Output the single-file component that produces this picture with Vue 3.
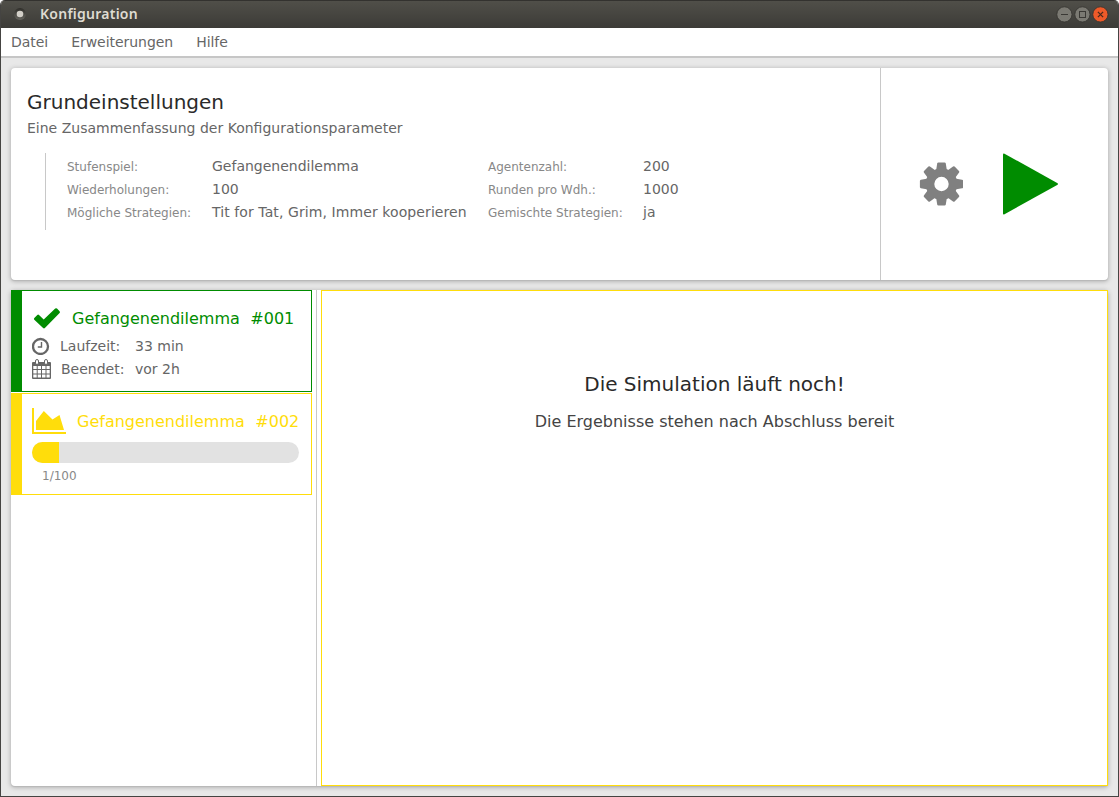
<script setup>
const menu = ['Datei', 'Erweiterungen', 'Hilfe']
const params = [
  ['Stufenspiel:', 'Gefangenendilemma', 'Agentenzahl:', '200'],
  ['Wiederholungen:', '100', 'Runden pro Wdh.:', '1000'],
  ['Mögliche Strategien:', 'Tit for Tat, Grim, Immer kooperieren', 'Gemischte Strategien:', 'ja'],
]
const progress = { done: 1, total: 100, width: 27 }
</script>

<template>
  <div class="window">
    <header class="titlebar">
      <svg class="app-icon" width="14" height="14" viewBox="0 0 14 14">
        <defs>
          <linearGradient id="ring" x1="0" y1="0" x2="0" y2="1">
            <stop offset="0" stop-color="#2f2e2a" />
            <stop offset="1" stop-color="#66655f" />
          </linearGradient>
        </defs>
        <circle cx="7" cy="7" r="6" fill="url(#ring)" />
        <circle cx="7" cy="7" r="3.3" fill="#d2cfc8" />
      </svg>
      <span class="title">Konfiguration</span>
      <div class="controls">
        <svg width="16" height="16" viewBox="0 0 16 16">
          <circle cx="8.4" cy="8.4" r="7.6" fill="#7b7a73" stroke="#33322e" stroke-width=".8" />
          <path d="M5 8.500h7" stroke="#3a3935" />
        </svg>
        <svg width="16" height="16" viewBox="0 0 16 16">
          <circle cx="8.400" cy="8.400" r="7.6" fill="#7b7a73" stroke="#33322e" stroke-width=".8" />
          <rect x="5.5" y="5.5" width="6" height="6" fill="none" stroke="#3a3935" />
        </svg>
        <svg width="16" height="16" viewBox="0 0 16 16">
          <circle cx="8.400" cy="8.400" r="7.6" fill="#ee5a29" stroke="#33322e" stroke-width=".8" />
          <path d="M5.900 5.900l5.200 5.200M11.100 5.900l-5.200 5.200" stroke="#4b2a1c" stroke-width="1.3" />
        </svg>
      </div>
    </header>

    <nav class="menubar">
      <span v-for="m in menu" :key="m">{{ m }}</span>
    </nav>

    <main class="content">
      <section class="card settings">
        <div class="summary">
          <h1>Grundeinstellungen</h1>
          <p class="sub">Eine Zusammenfassung der Konfigurationsparameter</p>
          <div class="params">
            <template v-for="row in params" :key="row[0]">
              <span class="label">{{ row[0] }}</span>
              <span class="value" :class="{ long: row[1].length > 20 }">{{ row[1] }}</span>
              <span class="label">{{ row[2] }}</span>
              <span class="value">{{ row[3] }}</span>
            </template>
          </div>
        </div>
        <div class="actions">
          <svg class="gear" width="44" height="44" viewBox="0 0 44 44">
            <g fill="#808080" transform="translate(.5 0)">
              <path
                v-for="n in 8"
                :key="n"
                :transform="`rotate(${n * 45} 22 22)`"
                d="M16.6 8.5L17.7 1.4Q17.9.4 18.9.4h6.2q1 0 1.2 1L27.4 8.5z"
              />
              <path fill-rule="evenodd" d="M22 6.2a15.8 15.8 0 1 0 0 31.6a15.8 15.8 0 1 0 0-31.6zM22 14.8a7.2 7.2 0 1 1 0 14.4a7.2 7.2 0 1 1 0-14.4z" />
            </g>
          </svg>
          <svg class="play" width="56" height="62" viewBox="0 0 56 62">
            <path d="M0 1.5Q0 .2 1.5.7L54.2 30Q55.8 31 54.2 32L1.5 61.2Q0 61.8 0 60.5z" fill="#008c00" />
          </svg>
        </div>
      </section>

      <section class="card workspace">
        <aside class="jobs">
          <article class="job done">
            <div class="job-head">
              <svg width="28" height="22" viewBox="0 0 28 22">
                <path d="M1.300 10.900L4.300 7.900Q5.200 7.100 6 7.900L10.700 12.500L22.200 1.600Q23.100.8 24 1.600L26.600 4.300Q27.400 5.200 26.600 6.100L11.900 21.100Q11 21.900 10.100 21.100L1.300 12.700Q.5 11.800 1.300 10.900z" fill="#008c00" />
              </svg>
              <span class="name">Gefangenendilemma</span><span class="num">#001</span>
            </div>
            <div class="info">
              <svg width="18" height="18" viewBox="0 0 18 18" fill="none" stroke="#666">
                <circle cx="8.500" cy="9.500" r="7.500" stroke-width="2.300" />
                <path d="M9.500 5v5H5.800" stroke-width="1.400" />
              </svg>
              <span class="key">Laufzeit:</span><span>33 min</span>
            </div>
            <div class="info calendar">
              <svg width="19" height="21" viewBox="0 0 19 21">
                <path fill="#666" fill-rule="evenodd" d="M1 3h17q1 0 1 1v15q0 1-1 1H1q-1 0-1-1V4q0-1 1-1zM1.300 7v3h3.400V7zM5.700 7v3H9V7zM10 7v3h3.500V7zM14.500 7v3h3.200V7zM1.300 11v3.400h3.400V11zM5.700 11v3.400H9V11zM10 11v3.400h3.500V11zM14.500 11v3.400h3.200V11zM1.300 15.400v3.200h3.400v-3.200zM5.700 15.400v3.200H9v-3.200zM10 15.400v3.200h3.500v-3.200zM14.500 15.400v3.200h3.200v-3.200z" />
                <rect x="3.500" y=".5" width="3" height="5" rx="1.500" fill="#fff" stroke="#666" />
                <rect x="12.500" y=".5" width="3" height="5" rx="1.500" fill="#fff" stroke="#666" />
              </svg>
              <span class="key">Beendet:</span><span>vor 2h</span>
            </div>
          </article>
          <article class="job running">
            <div class="job-head">
              <svg width="34" height="26" viewBox="0 0 34 26" fill="#ffdd0b">
                <path d="M0 0h2v24h32v2H0zM4 22v-9L11.800 3L20.500 11.500L27.500 7L32 22z" />
              </svg>
              <span class="name">Gefangenendilemma</span><span class="num">#002</span>
            </div>
            <div class="bar"><div class="fill" :style="{ width: progress.width + 'px' }"></div></div>
            <div class="count">{{ progress.done }}/{{ progress.total }}</div>
          </article>
        </aside>
        <div class="result">
          <h2>Die Simulation läuft noch!</h2>
          <p>Die Ergebnisse stehen nach Abschluss bereit</p>
        </div>
      </section>
    </main>
  </div>
</template>

<style>
body {
  background: #fff;
}
</style>

<style scoped>
* {
  box-sizing: border-box;
}
h1, h2, p {
  margin: 0;
  font-weight: 400;
}
svg {
  display: block;
  flex: none;
}
.window {
  display: flex;
  flex-direction: column;
  width: 1119px;
  height: 797px;
  border: 1px solid #454442;
  border-top: 0;
  border-radius: 5px 5px 0 0;
  overflow: hidden;
  background: #e8e8e8;
  font-family: "DejaVu Sans", sans-serif;
  white-space: nowrap;
}
.titlebar {
  display: flex;
  align-items: center;
  flex: none;
  height: 28px;
  padding: 0 10px 1px 12px;
  background: linear-gradient(#504f49, #3c3b37);
  border-top: 1px solid #33322f;
}
.controls svg {
  overflow: visible;
}
.title {
  margin-left: 13px;
  padding-bottom: 2px;
  flex: 1;
  font: 600 14px "Noto Sans", sans-serif;
  letter-spacing: 0.25px;
  color: #dfdbd2;
}
.controls {
  display: flex;
  gap: 2px;
}
.menubar {
  display: flex;
  flex: none;
  gap: 23px;
  height: 30px;
  padding-left: 10px;
  line-height: 29px;
  font-size: 14px;
  letter-spacing: -0.04px;
  color: #666;
  background: #fff;
  border-bottom: 2px solid #c6c6c6;
}
.content {
  display: flex;
  flex-direction: column;
  flex: 1;
  gap: 10px;
  padding: 10px;
}
.card {
  display: flex;
  background: #fff;
  border-radius: 4px;
  box-shadow: 0 1px 1px #b8b8b8, 0 1px 4px 1px #b8b8b8;
}
.settings {
  height: 212px;
  flex: none;
}
.summary {
  flex: 1;
  padding: 21px 0 0 16px;
}
h1 {
  font-size: 20px;
  line-height: 27px;
  color: #2a2a2a;
}
.sub {
  margin-top: 2px;
  font-size: 14px;
  line-height: 20px;
  color: #666;
}
.params {
  display: grid;
  grid-template-columns: 145px 276px 155px 100px;
  grid-auto-rows: 23px;
  margin: 15px 0 0 18px;
  padding: 2px 0 6px 21px;
  height: 77px;
  border-left: 1px solid #c8c8c8;
  line-height: 23px;
}
.label {
  padding-top: 1px;
  font-size: 12px;
  color: #888;
}
.value {
  font-size: 14px;
  color: #666;
}
.long {
  letter-spacing: 0.09px;
}
.actions {
  display: flex;
  width: 228px;
  padding: 85px 0 0 38px;
  gap: 40px;
  border-left: 1px solid #c8c8c8;
}
.gear {
  margin-top: 9px;
}
.workspace {
  flex: 1;
}
.jobs {
  width: 306px;
  flex: none;
  border-right: 1px solid #c8c8c8;
}
.job {
  width: 301px;
  height: 102px;
  border: 1px solid;
  border-left-width: 11px;
  margin-bottom: 1px;
}
.done {
  border-color: #008c00;
  color: #008c00;
  padding: 14px 0 0 10px;
}
.running {
  border-color: #ffdd0b;
  color: #ffdd0b;
  padding: 14px 0 0 10px;
}
.job-head {
  display: flex;
  align-items: center;
  height: 26px;
  font-size: 16px;
}
.done .job-head svg {
  margin: 0 11px 0 1px;
}
.running .job-head svg {
  margin-right: 11px;
}
.num {
  margin-left: 10.5px;
}
.info {
  display: flex;
  align-items: center;
  height: 23px;
  font-size: 14px;
  color: #666;
}
.done .job-head + .info {
  margin-top: 3px;
}
.info svg {
  margin-right: 10px;
}
.calendar svg {
  margin-top: 2px;
}
.key {
  width: 75px;
}
.info + .info .key {
  width: 74px;
}
.bar {
  width: 267px;
  height: 21px;
  margin-top: 8px;
  border-radius: 10.5px;
  background: #e2e2e2;
  overflow: hidden;
}
.fill {
  height: 100%;
  background: #ffdd0b;
}
.count {
  margin: 4px 0 0 10px;
  font-size: 12px;
  line-height: 18px;
  color: #888;
}
.result {
  flex: 1;
  margin-left: 4px;
  padding-top: 79px;
  border: 1px solid #ffdd0b;
  text-align: center;
}
h2 {
  font-size: 20px;
  line-height: 28px;
  color: #2a2a2a;
}
.result p {
  margin-top: 14px;
  font-size: 16px;
  line-height: 20px;
  color: #444;
}
</style>
